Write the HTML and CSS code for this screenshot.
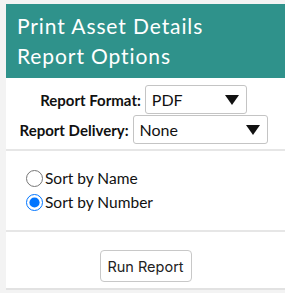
FILE: index.html
```html
<!DOCTYPE html>
<html lang="en">
<head>
    <meta charset="UTF-8">
    <title>Print Asset Details</title>
    <link rel="stylesheet" href="styles.css">
</head>
<body>
    <div class="panel">
        <div class="header">Print Asset Details<br>Report Options</div>
        <div class="options">
            <div class="row">
                <label for="format">Report Format:</label>
                <div class="select-wrap format">
                    <select id="format">
                        <option>PDF</option>
                    </select>
                    <span class="arrow"></span>
                </div>
            </div>
            <div class="row">
                <label for="delivery">Report Delivery:</label>
                <div class="select-wrap delivery">
                    <select id="delivery">
                        <option>None</option>
                    </select>
                    <span class="arrow"></span>
                </div>
            </div>
        </div>
        <div class="sorting">
            <label class="radio"><input type="radio" name="sort"> Sort by Name</label>
            <label class="radio"><input type="radio" name="sort" checked> Sort by Number</label>
        </div>
        <div class="actions">
            <button>Run Report</button>
        </div>
    </div>
</body>
</html>
```

FILE: styles.css
```css
*
{
    margin: 0;
    padding: 0;
    box-sizing: border-box;
}
body
{
    background-color: #f3f3f3;
    font-family: "Lato", "Open Sans", sans-serif;
    padding: 4px 0 0 6px;
}
.panel
{
    background-color: white;
    border-bottom: 2px solid #e2e2e2;
    height: 286px;
}
.header
{
    background-color: #2f928b;
    color: white;
    height: 74px;
    padding: 7px 11px;
    font-size: 21px;
    line-height: 30px;
    letter-spacing: 0.9px;
}
.options
{
    display: flex;
    flex-direction: column;
    align-items: center;
    gap: 1px;
    padding: 7px 4px 5px 0;
    border-bottom: 2px solid #e6e6e6;
}
.row
{
    display: flex;
    align-items: center;
    gap: 4px;
}
.row label
{
    font-weight: bold;
    font-size: 15px;
    color: #111;
}
.select-wrap
{
    position: relative;
}
select
{
    appearance: none;
    height: 29px;
    border: 1px solid #c4c4c4;
    border-radius: 3px;
    background-color: white;
    font-family: "Lato", sans-serif;
    font-size: 16px;
    padding: 0 6px;
    color: #111;
}
.format select
{
    width: 102px;
}
.delivery select
{
    width: 135px;
}
.arrow
{
    position: absolute;
    right: 8px;
    top: 10px;
    border-left: 7px solid transparent;
    border-right: 7px solid transparent;
    border-top: 10px solid #111;
}
.sorting
{
    display: flex;
    flex-direction: column;
    gap: 6px;
    padding: 18px 20px 19px 20px;
    border-bottom: 2px solid #e6e6e6;
}
.radio
{
    display: flex;
    align-items: center;
    font-size: 15.5px;
    line-height: 18px;
    color: #111;
}
.radio input
{
    width: 17px;
    height: 17px;
    margin: 0 2px 0 0;
}
.actions
{
    display: flex;
    justify-content: center;
    padding-top: 18px;
}
button
{
    width: 92px;
    height: 32px;
    background-color: white;
    border: 1px solid #c8c8c8;
    border-radius: 4px;
    font-family: "Inter", sans-serif;
    font-size: 14.5px;
    color: #222;
}
```
